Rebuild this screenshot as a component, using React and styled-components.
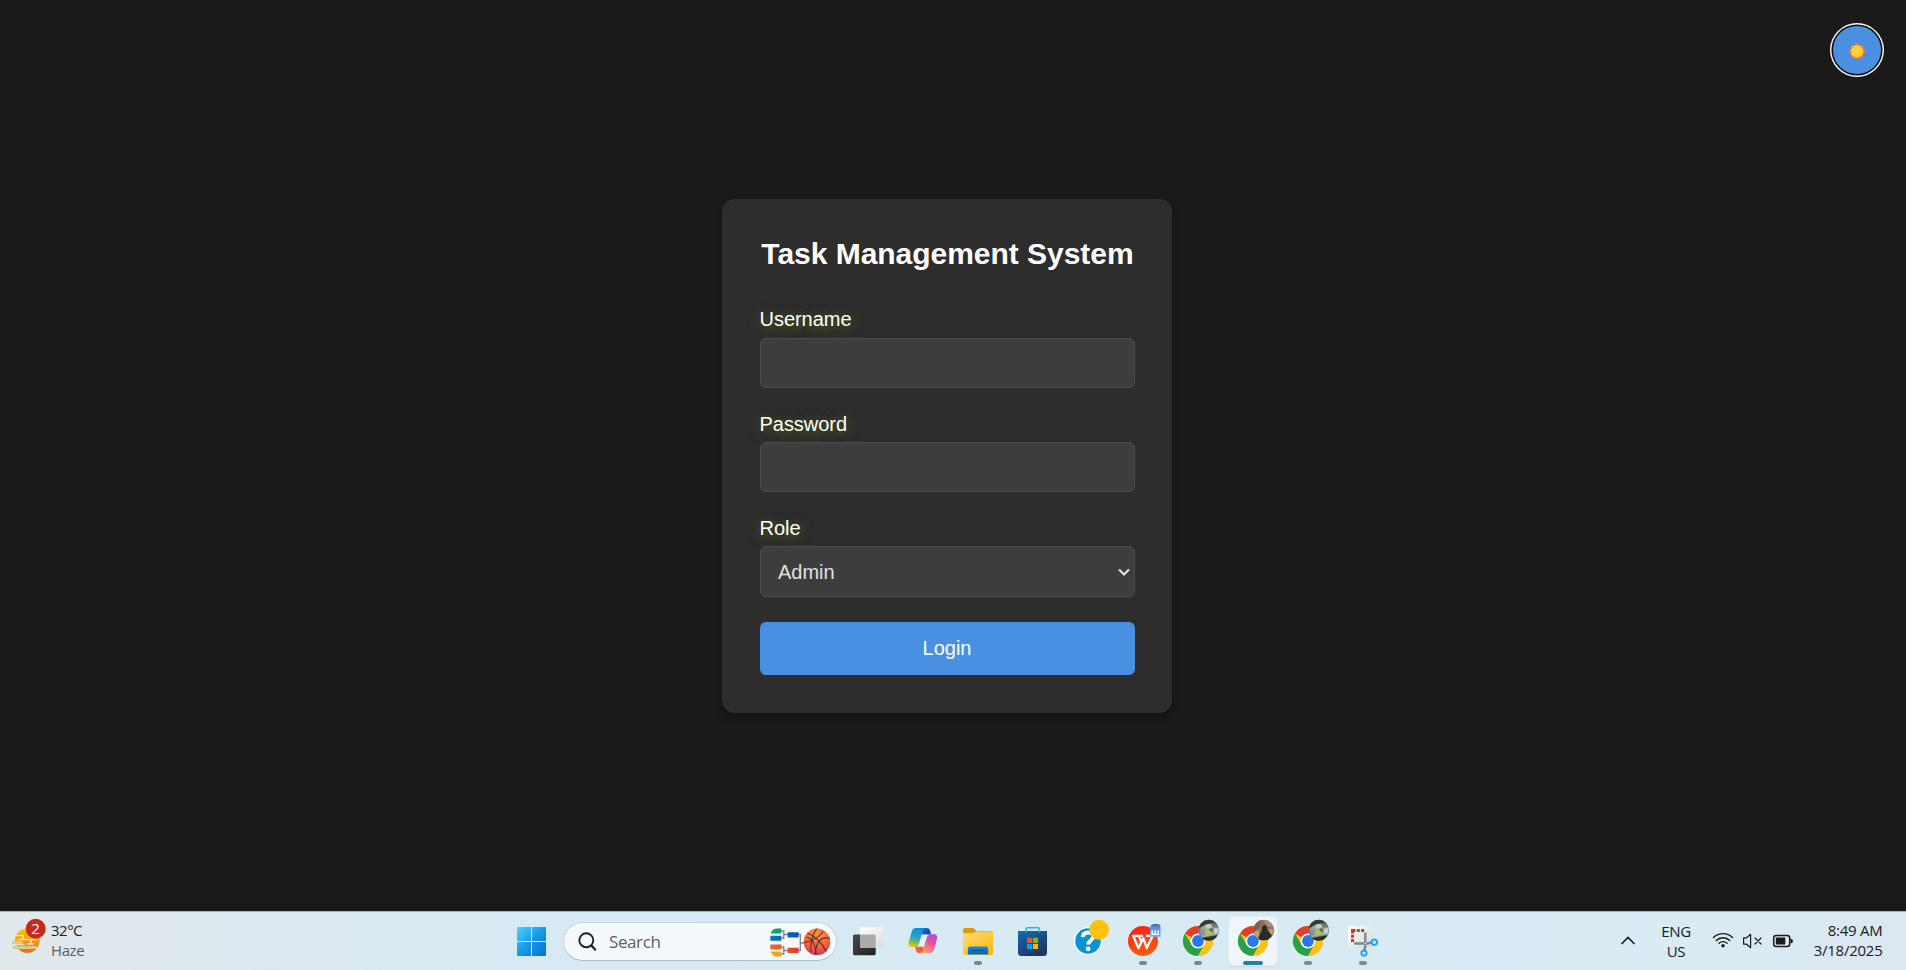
import React from 'react';
import styled, { createGlobalStyle } from 'styled-components';

const GlobalStyle = createGlobalStyle`
  * { box-sizing: border-box; }
  body { margin: 0; background: #1a1a1a; font-family: "Liberation Sans", Arial, sans-serif; }
  svg { display: block; flex: none; }
`;

const Screen = styled.div`
  width: 100%;
  height: 970px;
  display: flex;
  flex-direction: column;
  overflow: hidden;
`;

const Page = styled.main`
  position: relative;
  flex: 1;
  display: flex;
  justify-content: center;
  align-items: center;
  padding: 1px 12px 0 0;
  background: #1a1a1a;
`;

const ThemeToggle = styled.button`
  position: absolute;
  top: 26px;
  right: 25px;
  width: 48px;
  height: 48px;
  padding: 0;
  border: 0;
  border-radius: 50%;
  background: #4a90e2;
  box-shadow: 0 0 0 1.6px #101010, 0 0 0 3px #ffffff;
  display: grid;
  place-items: center;
`;

const Card = styled.form`
  width: 450px;
  height: 514px;
  padding: 37px 37px 38px 38px;
  border-radius: 12.5px;
  background: #2d2d2d;
  box-shadow: 0 5px 7.5px rgba(0, 0, 0, 0.3);
  display: flex;
  flex-direction: column;
`;

const Title = styled.h1`
  margin: 0 0 37px;
  font-size: 30px;
  line-height: 35px;
  font-weight: 700;
  letter-spacing: -0.03px;
  color: #fff;
  text-align: center;
  white-space: nowrap;
`;

const Field = styled.div`
  display: flex;
  flex-direction: column;
  margin-bottom: ${(p) => p.$gap || 24}px;
`;

const Label = styled.label`
  margin: ${(p) => (p.$drop ? '1px 0 6px -0.5px' : '0 0 7px -0.5px')};
  font-size: 20px;
  line-height: 23px;
  letter-spacing: -0.03px;
  color: #fff;
  text-shadow: 1px 2px 12px rgba(100, 130, 0, 0.8);
`;

const Input = styled.input`
  width: 100%;
  height: 50px;
  padding: 0 17px;
  border: 1px solid #4d4d4d;
  border-radius: 6px;
  background: #3d3d3d;
  color: #e0e0e0;
  font: 20px "Liberation Sans", Arial, sans-serif;
  outline: none;
`;

const SelectBox = styled.div`
  height: 51px;
  padding: 0 4px 0 17px;
  border: 1px solid #4d4d4d;
  border-radius: 6px;
  background: #3d3d3d;
  display: flex;
  align-items: center;
`;

const Select = styled.select`
  flex: 1;
  appearance: none;
  border: 0;
  padding: 0;
  background: transparent;
  color: #e0e0e0;
  font: 20px "Liberation Sans", Arial, sans-serif;
`;

const LoginButton = styled.button`
  height: 53px;
  padding: 0 1px 0 0;
  border: 0;
  border-radius: 6px;
  background: #4a90e2;
  color: #fff;
  font: 20px "Liberation Sans", Arial, sans-serif;
`;

const Taskbar = styled.footer`
  height: 59px;
  flex: none;
  display: flex;
  border-top: 1px solid #a9b1b6;
  background: linear-gradient(90deg, #e0e8eb 0%, #dce7ef 12%, #d7e9f2 27%, #d8ebf3 85%, #dce7f1 100%);
  font-family: "Open Sans", "Noto Sans", sans-serif;
  color: #1b1b1b;
  & > * { margin-top: -1px; }
`;

const Weather = styled.div`
  width: 504px;
  display: flex;
`;

const Lines = styled.div`
  display: flex;
  flex-direction: column;
  padding-top: ${(p) => p.$top}px;
  width: ${(p) => p.$width}px;
  align-items: ${(p) => p.$align || 'flex-start'};
`;

const Line = styled.span`
  font-size: 15px;
  line-height: 20px;
  height: 20px;
  white-space: nowrap;
  letter-spacing: ${(p) => p.$track || 0}px;
  color: ${(p) => p.$color || '#1b1b1b'};
`;

const SearchBox = styled.div`
  width: 274px;
  height: 39px;
  margin: 10px 3px 0 4px;
  border: 1px solid #c3d5dd;
  border-bottom-color: #aebfc7;
  border-radius: 20px;
  background: #f4f9fc;
  display: flex;
  align-items: center;
  padding-left: 13.5px;
  overflow: hidden;
`;

const SearchText = styled.span`
  flex: 1;
  margin-left: 12.5px;
  font-size: 17px;
  line-height: 24px;
  letter-spacing: -0.4px;
  color: #5d6163;
`;

const AppCell = styled.div`
  width: 55px;
  height: 59px;
  display: flex;
  flex-direction: column;
  align-items: center;
`;

const Tile = styled.div`
  width: 48px;
  height: 48px;
  margin-top: 6px;
  border-radius: 5px;
  display: flex;
  flex-direction: column;
  justify-content: flex-end;
  align-items: center;
  background: ${(p) => (p.$active ? '#eef6fb' : 'transparent')};
  box-shadow: ${(p) => (p.$active ? '0 0 0 1px #e0ecf2, 0 1px 1px 1px #c9d9e1' : 'none')};
`;

const Indicator = styled.i`
  height: 4px;
  border-radius: 2px;
  flex: none;
  width: ${(p) => (p.$state === 'active' ? 20 : 8)}px;
  background: ${(p) => (p.$state === 'active' ? '#26829a' : '#7f888c')};
  visibility: ${(p) => (p.$state ? 'visible' : 'hidden')};
`;

const Tray = styled.div`
  margin-left: auto;
  display: flex;
  padding-right: 23.5px;
`;

function TaskbarApp({ state, children }) {
  return (
    <AppCell>
      <Tile $active={state === 'active'}>
        <svg width="48" height="44" viewBox="3.5 6 48 44" overflow="visible">{children}</svg>
        <Indicator $state={state} />
      </Tile>
    </AppCell>
  );
}

const TaskView = () => (
  <>
    <defs>
      <linearGradient id="tvd" x1="0" y1="0" x2="1" y2="1"><stop stopColor="#4b4b4b" /><stop offset="1" stopColor="#202020" /></linearGradient>
      <linearGradient id="tvl" x1="0" y1="0" x2="1" y2="1"><stop stopColor="#fff" /><stop offset="1" stopColor="#dcdcdc" /></linearGradient>
    </defs>
    <rect x="12.5" y="23.5" width="22.7" height="20.7" rx="1.5" fill="url(#tvd)" />
    <rect x="19.5" y="16" width="23" height="21" rx="1.5" fill="url(#tvl)" />
    <path d="M19.5 23.5h14.2a1.5 1.5 0 0 1 1.5 1.5v12H21a1.5 1.5 0 0 1-1.5-1.5z" fill="#ababab" />
  </>
);

const Copilot = () => (
  <>
    <defs>
      <linearGradient id="cpa" x1="0.5" y1="0" x2="0.3" y2="1"><stop stopColor="#178bd8" /><stop offset=".45" stopColor="#20a2cf" /><stop offset=".75" stopColor="#72bd55" /><stop offset="1" stopColor="#f2c500" /></linearGradient>
      <linearGradient id="cpb" x1="0.8" y1="0" x2="0.3" y2="1"><stop stopColor="#a650e8" /><stop offset=".45" stopColor="#e9509c" /><stop offset="1" stopColor="#ffa35d" /></linearGradient>
      <linearGradient id="cpc" x1="0" y1="0" x2="1" y2="1"><stop stopColor="#1c78db" /><stop offset="1" stopColor="#1637b4" /></linearGradient>
    </defs>
    <path d="M24 17h7.500c1.700 0 2.700 1.200 3.100 2.700l1 3.800h-8.600z" fill="url(#cpc)" />
    <path d="M31 42h-7.500c-1.800 0-2.600-1.100-3-2.700l-1.100-3.800h8.100z" fill="#ee6242" />
    <path d="M20.300 17h10c-2.100.5-2.900 2-3.400 3.800L23.700 32c-.8 2.600-2.300 3.900-4.900 3.900h-2.700c-2.800 0-3.500-2.600-2.800-5l2.600-9.100c.8-2.900 1.800-4.800 4.400-4.800z" fill="url(#cpa)" />
    <path d="M34.500 42h-10c2.100-.5 2.900-2 3.400-3.800l3.200-11.300c.8-2.500 2.300-3.700 4.900-3.700h2.700c2.800 0 3.500 2.500 2.800 4.900l-2.600 9.100c-.8 2.900-1.800 4.800-4.400 4.800z" fill="url(#cpb)" />
    <path d="M27.400 23.800h4.400q-1.200 1-1.700 2.700l-2.600 9h-4.700q1.200-1 1.700-2.700z" fill="#e2f0f6" />
  </>
);

const Explorer = () => (
  <>
    <defs>
      <linearGradient id="fxa" x1="0" y1="0" x2="1" y2="1"><stop stopColor="#ffdc70" /><stop offset="1" stopColor="#f9b813" /></linearGradient>
      <linearGradient id="fxb" x1="0" y1="0" x2="0" y2="1"><stop stopColor="#158bd8" /><stop offset="1" stopColor="#0864b6" /></linearGradient>
    </defs>
    <path d="M12.500 24v-5.500Q12.500 17 14 17h8q1 0 1.800.8L26 20h15q1.500 0 1.500 1.500V25z" fill="#dc9a09" />
    <path d="M12.500 22h9.500q1 0 1.900-.6l1.300-.8h15.800q1.500 0 1.500 1.500v20.400q0 1.500-1.500 1.500H14q-1.500 0-1.500-1.500z" fill="url(#fxa)" />
    <path d="M17.300 43.500v-5.500q0-2.500 2.500-2.500h15.400q2.500 0 2.500 2.500v5.500z" fill="url(#fxb)" />
    <path d="M21 39.500h13" stroke="#064c88" strokeWidth="1" />
  </>
);

const Store = () => (
  <>
    <defs>
      <linearGradient id="sta" x1="0" y1="0" x2="0.6" y2="1"><stop stopColor="#126bb8" /><stop offset="1" stopColor="#20345e" /></linearGradient>
    </defs>
    <path d="M12.500 20h29v21.500a3.500 3.500 0 0 1-3.500 3.500H16a3.500 3.500 0 0 1-3.500-3.500z" fill="url(#sta)" />
    <path d="M20.500 21.500v-3.200q0-1.500 1.500-1.500h10.400q1.500 0 1.500 1.500v3.200" fill="none" stroke="#24b8ee" strokeWidth="1.600" />
    <path fill="#f25022" d="M21.500 26.700h5.300V32h-5.300z" />
    <path fill="#7fba00" d="M27.600 26.700h5V32h-5z" />
    <path fill="#00a4ef" d="M21.500 33h5.300v5h-5.300z" />
    <path fill="#ffb900" d="M27.600 33h5v5h-5z" />
  </>
);

const Help = () => (
  <>
    <circle cx="27.500" cy="30" r="14" fill="#fff" />
    <circle cx="27.500" cy="30" r="12.800" fill="#0794d3" />
    <path d="M22.200 26.200c.2-3.100 2.500-4.700 5.300-4.700 3.100 0 5.200 1.600 5.200 4.200 0 3.600-4.900 3.700-4.900 7.800" fill="none" stroke="#fff" strokeWidth="3.900" />
    <circle cx="27.600" cy="37.800" r="2.400" fill="#fff" />
    <circle cx="38.600" cy="18.700" r="10" fill="#ffc20e" />
  </>
);

const Wps = () => (
  <>
    <defs>
      <linearGradient id="wpa" x1="0" y1="0" x2="0.3" y2="1"><stop stopColor="#ff1a1d" /><stop offset="1" stopColor="#ff5a0b" /></linearGradient>
      <linearGradient id="wpb" x1="0" y1="0" x2="0" y2="1"><stop stopColor="#3d6086" /><stop offset=".3" stopColor="#5a92ee" /><stop offset="1" stopColor="#76a8f7" /></linearGradient>
    </defs>
    <circle cx="27.500" cy="30" r="15" fill="url(#wpa)" />
    <path d="M27.500 24.800H17.700l5.200 12.300 5-9.800 3.300 9.800 6-12.300h-6.700M23.500 25l2 5.500" fill="none" stroke="#fff" strokeWidth="2.300" strokeLinejoin="round" />
    <path d="M34.500 18q0-5 5-5h2q3.500 0 3.500 3v9.800H34.500z" fill="url(#wpb)" />
    <path d="M36.700 19.300v4h6v-4M39.700 19.300v4" fill="none" stroke="#fff" strokeWidth="1.300" />
  </>
);

const Chrome = ({ id, dark }) => (
  <>
    <defs>
      <clipPath id={`av${id}`}><circle cx="38.200" cy="19.300" r="10.500" /></clipPath>
      <filter id={`bl${id}`}><feGaussianBlur stdDeviation="0.7" /></filter>
    </defs>
    <circle cx="27.500" cy="30" r="15" fill="#fbc116" />
    <path d="M27.500 30L14.500 22.500A15 15 0 0 1 40.500 22.500H27.500z" fill="#e33b2e" />
    <path d="M14.500 22.500A15 15 0 0 0 27.500 45L34 33.700 27.500 30 21 33.700z" fill="#2aa04a" />
    <path d="M27.500 22.500h13A15 15 0 0 1 27.500 45L34 33.700z" fill="#fbc116" />
    <circle cx="27.500" cy="30" r="7.500" fill="#fff" />
    <circle cx="27.500" cy="30" r="5.900" fill="#2877ec" />
    <g clipPath={`url(#av${id})`}>
      <rect x="27" y="8" width="23" height="23" fill={dark ? '#8f735d' : '#6d8060'} />
      {dark ? (
        <g filter={`url(#bl${id})`}>
          <path d="M27 8h9l-2 8-7 6z" fill="#7a5f4a" />
          <path d="M38 9l9 1 2 7-7-2z" fill="#a88a76" />
          <path d="M36.500 16q2.500-4 5 0l.5 4q4 2 4 5l-4 4h-8q-2-5 2-8z" fill="#2b2927" />
          <path d="M29 21l4-2 1 6-4 2z" fill="#c0a287" />
          <path d="M44.500 17l3.500 2-1 5-3-2z" fill="#c09c80" />
        </g>
      ) : (
        <g filter={`url(#bl${id})`}>
          <path d="M27 8h22v6q-5-3-10-1.500L28 17z" fill="#33402c" />
          <path d="M30 18q4-6 9-3t9 1l-1 8-9 1-7 2z" fill="#98ad86" />
          <path d="M35 13.500l5-.5 2 3-6 2zM43 18l5-1v5l-4 1z" fill="#c6cbdc" />
          <path d="M29 20l4-2 1.500 5-4 2z" fill="#7f8fc2" />
          <path d="M35 20l5-1 2 4-6 2z" fill="#b9bd60" />
          <path d="M40 17l3 1-1 3-3-1z" fill="#55704a" />
          <path d="M31 27l7-1 9-2-4 8h-9z" fill="#2a3026" />
        </g>
      )}
    </g>
  </>
);

const Snip = () => (
  <>
    <defs>
      <linearGradient id="sna" x1="0" y1="0" x2="1" y2="1"><stop stopColor="#fff" /><stop offset="1" stopColor="#d5dadd" /></linearGradient>
    </defs>
    <rect x="12.500" y="15" width="22" height="22" rx="2" fill="url(#sna)" />
    <g fill="#d53a16">
      <path d="M15.500 18h4.500v3h-1.500v1.500h-3zM21.300 18h3v3h-3zM25.600 18h3v3h-3zM15.500 23.700h3v3h-3zM15.500 27.900h3v3h-3z" />
    </g>
    <path d="M29.800 21.500V35L28.800 39" fill="none" stroke="#84898d" strokeWidth="2.400" />
    <path d="M18.500 32.500H32l4-1.300" fill="none" stroke="#84898d" strokeWidth="2.400" />
    <circle cx="29.800" cy="32.500" r=".8" fill="#eee" />
    <circle cx="38.800" cy="31.200" r="2.700" fill="none" stroke="#23a4e3" strokeWidth="1.900" />
    <circle cx="28.500" cy="42.100" r="2.600" fill="none" stroke="#23a4e3" strokeWidth="1.900" />
    <path d="M33.500 32.300l2.700-.5M29.500 36.500l-.6 3" stroke="#23a4e3" strokeWidth="1.900" />
  </>
);

const apps = [
  { key: 'taskview', icon: <TaskView /> },
  { key: 'copilot', icon: <Copilot /> },
  { key: 'explorer', icon: <Explorer />, state: 'open' },
  { key: 'store', icon: <Store /> },
  { key: 'help', icon: <Help /> },
  { key: 'wps', icon: <Wps />, state: 'open' },
  { key: 'chrome1', icon: <Chrome id="1" />, state: 'open' },
  { key: 'chrome2', icon: <Chrome id="2" dark />, state: 'active' },
  { key: 'chrome3', icon: <Chrome id="3" />, state: 'open' },
  { key: 'snip', icon: <Snip />, state: 'open' },
];

const SunBadge = () => (
  <svg width="51" height="59" viewBox="0 0 51 59">
    <defs>
      <linearGradient id="sun" x1="0" y1="0" x2="0" y2="1"><stop stopColor="#fdc90b" /><stop offset="1" stopColor="#ef6a10" /></linearGradient>
      <clipPath id="sunc"><circle cx="27.300" cy="29.500" r="12.300" /></clipPath>
    </defs>
    <circle cx="27.300" cy="29.500" r="12.300" fill="url(#sun)" />
    <g clipPath="url(#sunc)" stroke="#f7e5b5" strokeWidth="1.700" strokeLinecap="round" fill="none">
      <path d="M14 24.500h8M18 28.500h19M28 32.800h5M14 33.500h10M31 28.500v4M23 24.500v4" />
    </g>
    <path d="M13.500 31.500h8M14 36.500h22" stroke="#dbc98f" strokeWidth="3" strokeLinecap="round" />
    <circle cx="35.700" cy="17.700" r="10" fill="#c42b1c" />
    <text x="35.500" y="23" textAnchor="middle" fontSize="15" fill="#fff" fontFamily="Open Sans, sans-serif">2</text>
  </svg>
);

const Start = () => (
  <svg width="55" height="59" viewBox="0 0 55 59">
    <defs>
      <linearGradient id="win" gradientUnits="userSpaceOnUse" x1="13" y1="16" x2="42" y2="45"><stop stopColor="#50d2ff" /><stop offset=".5" stopColor="#1799e5" /><stop offset="1" stopColor="#0071d0" /></linearGradient>
    </defs>
    <path d="M13 17q0-1 1-1h13v14H13zM28 16h13q1 0 1 1v13H28zM13 31h14v14H14q-1 0-1-1zM28 31h14v13q0 1-1 1H28z" fill="url(#win)" />
  </svg>
);

const Bracket = () => (
  <svg width="67" height="37" viewBox="768.7 11.500 67 37">
    <defs>
      <radialGradient id="ball" cx=".5" cy=".2" r=".85"><stop stopColor="#ff8f3d" /><stop offset=".6" stopColor="#f4652f" /><stop offset="1" stopColor="#cd2a68" /></radialGradient>
      <clipPath id="ballc"><circle cx="816.700" cy="30.300" r="13.300" /></clipPath>
      <linearGradient id="bblue"><stop stopColor="#0c72cc" /><stop offset="1" stopColor="#0a57ab" /></linearGradient>
      <linearGradient id="bred"><stop stopColor="#f0692c" /><stop offset="1" stopColor="#e73b25" /></linearGradient>
    </defs>
    <path d="M781 19.500h2.500V26.500H781M783.500 23h5M781 35.500h2.500v7H781M783.500 39h5M797 23h3v16h-3M800 31.500h4" fill="none" stroke="#807c92" strokeWidth="1.300" />
    <path d="M770.500 22q1-5 7-5h3.500v5z" fill="#12a169" />
    <path d="M770 24.200h11v5h-11zM787.300 20.800h11v5.300h-11z" fill="url(#bblue)" />
    <path d="M770 33h11v5h-11zM787.300 36.200h11v5.300h-11z" fill="url(#bred)" />
    <path d="M770.500 40H781v5h-3.500q-6 0-7-5z" fill="#f5a31b" />
    <circle cx="816.700" cy="30.300" r="13.300" fill="url(#ball)" />
    <g clipPath="url(#ballc)" fill="none" stroke="#543040" strokeWidth="1.100">
      <path d="M806 21q13 5 20 19M803 31q12-1 20-11M806 26q8 0 10 17M811 40q-2-12 6-24M830 27q-14-4-15 16" />
    </g>
  </svg>
);

const TrayIcons = () => (
  <svg width="84" height="59" viewBox="1710 0 84 59" fill="none" stroke="#1b1b1b" strokeWidth="1.200" strokeLinecap="round">
    <path d="M1713.500 26.500a13.500 13.500 0 0 1 19 0M1716.200 29.500a9.700 9.700 0 0 1 13.600 0M1719 32.300a5.700 5.700 0 0 1 8 0" strokeWidth="1.400" />
    <circle cx="1723" cy="34.700" r="1.700" fill="#1b1b1b" stroke="none" />
    <path d="M1743.600 26.800h3l4-3.500v13.400l-4-3.500h-3z" strokeLinejoin="round" />
    <path d="M1755 27l6 6M1761 27l-6 6" />
    <rect x="1773.700" y="24.600" width="16" height="11" rx="2.500" strokeWidth="1.500" />
    <rect x="1775.800" y="26.600" width="9.500" height="7" rx=".8" fill="#1b1b1b" stroke="none" />
    <path d="M1790.500 27.800v4.600q2.500 0 2.500-2.300t-2.500-2.300z" fill="#1b1b1b" stroke="none" />
  </svg>
);

export default function App() {
  return (
    <Screen>
      <GlobalStyle />
      <Page>
        <Card onSubmit={(e) => e.preventDefault()}>
          <Title>Task Management System</Title>
          <Field>
            <Label htmlFor="username">Username</Label>
            <Input id="username" />
          </Field>
          <Field>
            <Label htmlFor="password" $drop>Password</Label>
            <Input id="password" type="password" />
          </Field>
          <Field $gap={25}>
            <Label htmlFor="role" $drop>Role</Label>
            <SelectBox>
              <Select id="role"><option>Admin</option></Select>
              <svg width="12" height="10" viewBox="0 0 12 10"><path d="M1 2.500l5 5 5-5" fill="none" stroke="#e0e0e0" strokeWidth="2.200" /></svg>
            </SelectBox>
          </Field>
          <LoginButton>Login</LoginButton>
        </Card>
        <ThemeToggle aria-label="Toggle theme">
          <svg width="18" height="20" viewBox="-9 -10 18 20">
            <g transform="translate(0 1.300)">
              {[0, 45, 90, 135, 180, 225, 270, 315].map((a) => (
                <circle key={a} r="2.200" cx="0" cy="-6" transform={`rotate(${a})`} fill="#fc7a2b" />
              ))}
              <circle r="6.900" fill="#fc7a2b" />
              <circle r="6.100" fill="#ffd13b" />
            </g>
          </svg>
        </ThemeToggle>
      </Page>
      <Taskbar>
        <Weather>
          <SunBadge />
          <Lines $top={9} $width={60}>
            <Line $track={-0.5}>32°C</Line>
            <Line $color="#5d6163" $track={-0.4}>Haze</Line>
          </Lines>
        </Weather>
        <Start />
        <SearchBox>
          <svg width="19" height="20" viewBox="0 0 19 20"><circle cx="8.300" cy="8.300" r="7" fill="none" stroke="#222" strokeWidth="1.900" /><path d="M13.300 13.500l4.500 4.700" stroke="#222" strokeWidth="2.300" /></svg>
          <SearchText>Search</SearchText>
          <Bracket />
        </SearchBox>
        {apps.map((a) => <TaskbarApp key={a.key} state={a.state}>{a.icon}</TaskbarApp>)}
        <Tray>
          <svg width="36" height="59" viewBox="1609 0 36 59"><path d="M1622 32.500l6-6 6 6" fill="none" stroke="#1b1b1b" strokeWidth="1.700" strokeLinecap="round" /></svg>
          <Lines $top={10} $width={62} $align="center">
            <Line $track={-0.4}>ENG</Line>
            <Line $track={-0.4}>US</Line>
          </Lines>
          <svg width="3" height="59" />
          <TrayIcons />
          <Lines $top={9} $width={88.5} $align="flex-end">
            <Line $track={-0.25}>8:49 AM</Line>
            <Line $track={-0.25}>3/18/2025</Line>
          </Lines>
        </Tray>
      </Taskbar>
    </Screen>
  );
}
